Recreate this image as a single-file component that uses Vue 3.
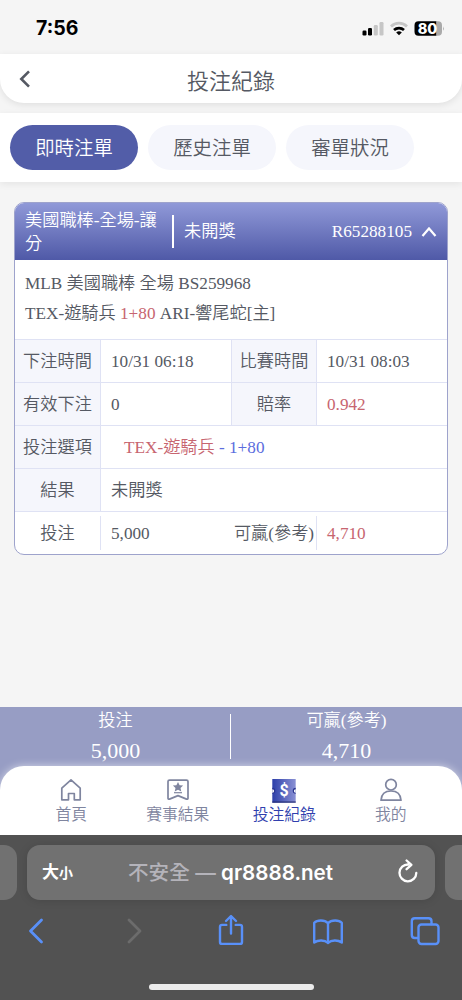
<script setup>
const tabs = ['即時注單', '歷史注單', '審單狀況']
const rows = [
  [
    { label: '下注時間', value: '10/31 06:18' },
    { label: '比賽時間', value: '10/31 08:03' },
  ],
  [
    { label: '有效下注', value: '0' },
    { label: '賠率', value: '0.942', red: true },
  ],
]
const totals = [
  { label: '投注', value: '5,000' },
  { label: '可贏(參考)', value: '4,710' },
]
</script>

<template>
  <div class="phone">
    <header class="status">
      <span class="clock">7:56</span>
      <svg class="signals" width="84" height="18" viewBox="0 0 84 18">
        <rect x="0.5" y="9.5" width="4" height="5" rx="1.2" fill="#000" />
        <rect x="6" y="7" width="4" height="7.5" rx="1.2" fill="#000" />
        <rect x="11.8" y="4" width="4" height="10.5" rx="1.2" fill="#c6c6c6" />
        <rect x="17.5" y="1" width="4" height="13.5" rx="1.2" fill="#c6c6c6" />
        <path d="M29 5.500a11.300 11.300 0 0 1 16 0" fill="none" stroke="#c6c6c6" stroke-width="2.7" />
        <path d="M32 9a7.4 7.4 0 0 1 10 0" fill="none" stroke="#000" stroke-width="2.7" />
        <path d="M34.2 11.5a4.2 4.2 0 0 1 5.6 0L37 14.3z" fill="#000" />
        <path d="M56.5.2h18v14.6h-18a4 4 0 0 1-4-4V4.2a4 4 0 0 1 4-4z" fill="#000" />
        <path d="M74.5.2h1.500a4 4 0 0 1 4 4v6.600a4 4 0 0 1-4 4h-1.500z" fill="#aaa" />
        <path d="M81 5.200q1.600 2.300 0 4.600z" fill="#aaa" />
        <text x="65.500" y="12.600" text-anchor="middle" class="battery">80</text>
      </svg>
    </header>

    <nav class="title-bar">
      <svg class="back" width="12" height="18" viewBox="0 0 12 18"><path d="M10 1.300 2.300 9l7.700 7.700" /></svg>
      <h1>投注紀錄</h1>
    </nav>

    <div class="tabs">
      <button v-for="(tab, i) in tabs" :key="tab" :class="{ active: i === 0 }">{{ tab }}</button>
    </div>

    <section class="card">
      <div class="card-head">
        <span class="game">美國職棒-全場-讓分</span>
        <i class="bar"></i>
        <span class="state">未開獎</span>
        <span class="serial">R65288105</span>
        <svg width="16" height="12" viewBox="0 0 16 12"><path d="M1.500 10 8 2.500l6.500 7.500" /></svg>
      </div>
      <div class="match">
        <p>MLB 美國職棒 全場 BS259968</p>
        <p>TEX-遊騎兵 <span class="red">1+80</span> ARI-響尾蛇[主]</p>
      </div>
      <div v-for="(row, i) in rows" :key="i" class="row">
        <template v-for="cell in row" :key="cell.label">
          <span class="label">{{ cell.label }}</span>
          <span class="value" :class="{ red: cell.red }">{{ cell.value }}</span>
        </template>
      </div>
      <div class="row wide">
        <span class="label">投注選項</span>
        <span class="value pick"><span class="red">TEX-遊騎兵</span> <span class="blue">- 1+80</span></span>
      </div>
      <div class="row wide">
        <span class="label">結果</span>
        <span class="value">未開獎</span>
      </div>
      <div class="row last">
        <span class="label">投注</span>
        <span class="value">5,000</span>
        <span class="label">可贏(參考)</span>
        <span class="value red">4,710</span>
      </div>
    </section>

    <footer class="bottom">
      <div class="totals">
        <div v-for="t in totals" :key="t.label" class="total">
          <span>{{ t.label }}</span>
          <b>{{ t.value }}</b>
        </div>
      </div>
      <nav class="menu">
        <a>
          <svg width="26" height="26" viewBox="0 0 26 26" class="line">
            <path d="M3.800 11.200 13 2.800l9.200 8.400v11.600h-5.900v-6.300h-5.800v6.300H3.800z" />
          </svg>
          <span>首頁</span>
        </a>
        <a>
          <svg width="26" height="26" viewBox="0 0 26 26" class="line">
            <path d="M4.500 3.100h17q1.500 0 1.500 1.500v16.700q0 1.200-1.500.8L13 18.600l-8.500 3.500q-1.500.4-1.500-.8V4.600q0-1.500 1.500-1.500z" />
            <path d="m13 5 1.600 3.200 3.500.4-2.600 2.400.8 3.500-3.300-1.800-3.300 1.800.8-3.500-2.600-2.400 3.500-.4z" fill="#7f859f" stroke="none" />
            <path d="M9 15.700h8" stroke-width="1.200" />
          </svg>
          <span>賽事結果</span>
        </a>
        <a class="current">
          <svg width="26" height="26" viewBox="0 0 26 26">
            <defs>
              <linearGradient id="ticket" x1="0" x2="1" y1="0" y2="0">
                <stop offset="0" stop-color="#2c3ea9" />
                <stop offset="1" stop-color="#8a91d4" />
              </linearGradient>
            </defs>
            <path d="M1.300 2h23.400v23.700H1.300z" fill="url(#ticket)" />
            <path d="M1.300 24.300h23.400v1.500H1.300z" fill="#252e72" opacity=".75" />
            <path d="M1.300 10.800a3 3 0 0 1 0 6zM24.700 10.800a3 3 0 0 0 0 6z" fill="#2a3590" />
            <path d="M1.300 12.300a1.800 1.800 0 0 1 0 3.600zM24.700 12.300a1.800 1.800 0 0 0 0 3.600z" fill="#fff" />
            <text x="13" y="19.300" text-anchor="middle" class="dollar">$</text>
          </svg>
          <span>投注紀錄</span>
        </a>
        <a>
          <svg width="26" height="26" viewBox="0 0 26 26" class="line">
            <circle cx="13" cy="7.700" r="5.300" />
            <path d="M3 23.200c.4-6 4.200-9.200 10-9.200s9.600 3.200 10 9.200z" />
          </svg>
          <span>我的</span>
        </a>
      </nav>
    </footer>

    <div class="browser">
      <div class="address-row">
        <i class="tab-edge left"></i>
        <div class="address">
          <span class="size">大<small>小</small></span>
          <span class="url"><em>不安全 —</em> qr8888.net</span>
          <svg width="22" height="26" viewBox="0 0 22 26">
            <path d="M11.300 5.500A8.400 8.400 0 1 0 19.300 14M9.600 1.500l4.800 4.300-4.800 4.400" />
          </svg>
        </div>
        <i class="tab-edge right"></i>
      </div>
      <div class="tools">
        <svg width="34" height="34" viewBox="-2 0 34 34"><path d="M20.500 6 9.500 17l11 11" stroke-width="2.800" /></svg>
        <svg width="34" height="34" viewBox="-2 0 34 34" class="off"><path d="m11 6 11 11-11 11" stroke-width="2.800" /></svg>
        <svg width="34" height="34" viewBox="-2 0 34 34">
          <path d="M10.300 10.900H6q-2 0-2 2v15q0 2 2 2h18q2 0 2-2v-15q0-2-2-2h-4.300M15 19.500V2.500M10 7l5-5 5 5" />
        </svg>
        <svg width="34" height="34" viewBox="0 0 34 34">
          <path d="M17 9.200C13.500 5.400 6 5.800 3.200 8.800V28.500c4-2.800 10.300-2.800 13.800.500 3.500-3.300 9.800-3.300 13.800-.500V8.800C28 5.800 20.500 5.400 17 9.200zV29" />
        </svg>
        <svg width="34" height="34" viewBox="0 0 34 34">
          <rect x="10.500" y="10.500" width="20" height="19.500" rx="3" />
          <path d="M10 24H6.800q-3 0-3-3V7.300q0-3 3-3H20.500q3 0 3 3v2.700" />
        </svg>
      </div>
      <i class="home-bar"></i>
    </div>
  </div>
</template>

<style>
body {
  background: #f5f5f5;
}
</style>

<style scoped>
* {
  box-sizing: border-box;
}
.phone {
  width: 462px;
  height: 1000px;
  overflow: hidden;
  display: flex;
  flex-direction: column;
  background: #f5f5f5;
  color: #555963;
  font: 350 17.200px/24px 'Liberation Serif', 'Noto Sans CJK TC', serif;
}
.status {
  height: 54px;
  flex: none;
  display: flex;
  justify-content: space-between;
  padding: 16px 16px 0 36px;
}
.clock {
  color: #000;
  font: 700 19.500px/24px Inter, sans-serif;
}
.signals {
  margin-top: 5px;
}
.battery {
  font: 800 14.500px Inter, sans-serif;
  fill: #fff;
}
.title-bar {
  height: 49px;
  flex: none;
  position: relative;
  display: flex;
  align-items: center;
  justify-content: center;
  background: #fff;
  border-radius: 0 0 24px 24px;
  box-shadow: 0 2px 7px rgba(0, 0, 0, 0.09);
}
.back {
  position: absolute;
  left: 19px;
  top: 16px;
  fill: none;
  stroke: #555963;
  stroke-width: 2.600;
}
h1 {
  margin: 0;
  font: 350 22px/30px 'Noto Sans CJK TC', sans-serif;
}
.tabs {
  height: 69px;
  flex: none;
  margin-top: 10px;
  padding: 12px 10px;
  display: flex;
  gap: 10px;
  background: #fff;
  box-shadow: 0 2px 7px rgba(0, 0, 0, 0.07);
}
.tabs button {
  width: 128px;
  height: 45px;
  border: 0;
  padding: 0 0 2px;
  border-radius: 23px;
  background: #f5f6fc;
  color: #555963;
  font: 350 19.400px/43px 'Noto Sans CJK TC', sans-serif;
}
.tabs .active {
  background: #525da8;
  color: #fff;
}
.card {
  width: 434px;
  height: 353px;
  flex: none;
  margin: 20px 0 0 14px;
  border: 1px solid #9ea3cc;
  border-radius: 10px;
  overflow: hidden;
  background: #fff;
}
.card-head {
  height: 57px;
  display: flex;
  align-items: center;
  padding: 0 10px;
  background: linear-gradient(#9099d8, #4f59a7);
  color: #fff;
}
.game {
  width: 147px;
  padding-right: 12px;
  line-height: 23px;
}
.bar {
  width: 2px;
  height: 33px;
  background: #fff;
}
.state {
  margin-left: 10px;
}
.serial {
  margin-left: auto;
  margin-right: 9px;
}
.card-head svg {
  fill: none;
  stroke: #fff;
  stroke-width: 2.200;
}
.match {
  height: 79px;
  padding: 9px 10px;
}
.match p {
  margin: 0;
  line-height: 30px;
}
.row {
  height: 43px;
  display: grid;
  grid-template-columns: 86px 131px 85px 1fr;
  grid-template-rows: 42px;
  border-top: 1px solid #dfe2f4;
  line-height: 43px;
}
.row.wide {
  grid-template-columns: 86px 1fr;
}
.label {
  text-align: center;
  background: #f5f6fc;
  border-right: 1px solid #dfe2f4;
  white-space: nowrap;
}
.value {
  padding-left: 10px;
}
.row:not(.wide) .value:nth-child(2) {
  border-right: 1px solid #dfe2f4;
}
.pick {
  padding-left: 23px;
}
.red {
  color: #c76570;
}
.blue {
  color: #5c6dde;
}
.row.last {
  grid-template-rows: 34px;
  padding: 4px 0;
  line-height: 36px;
}
.last .label {
  background: none;
}
.row.last .value:nth-child(2) {
  border: 0;
}
.bottom {
  height: 128px;
  flex: none;
  margin-top: 152px;
  background: #979dc4;
}
.totals {
  height: 59px;
  display: flex;
  color: #fff;
}
.total {
  width: 50%;
  display: flex;
  flex-direction: column;
  align-items: center;
  position: relative;
}
.total + .total::before {
  content: '';
  position: absolute;
  left: -1px;
  top: 7px;
  width: 1px;
  height: 45px;
  background: #fff;
}
.total span {
  line-height: 28px;
}
.total b {
  font-weight: 400;
  font-size: 22px;
  line-height: 32px;
}
.menu {
  height: 69px;
  display: flex;
  padding: 0 18px;
  background: #fff;
  border-radius: 24px 24px 0 0;
  box-shadow: 0 0 8px rgba(255, 255, 255, 0.6);
}
.menu a {
  flex: 1;
  display: flex;
  flex-direction: column;
  align-items: center;
  padding-top: 11px;
  color: #7f859f;
  font: 350 15.800px/22px 'Noto Sans CJK TC', sans-serif;
}
.menu .current {
  color: #303fae;
}
.line {
  fill: none;
  stroke: #7f859f;
  stroke-width: 1.700;
  stroke-linejoin: round;
}
.dollar {
  font: 700 16px Roboto, sans-serif;
  fill: #fff;
}
.browser {
  flex: 1;
  background: #525252;
}
.address-row {
  display: flex;
  justify-content: space-between;
  padding-top: 10px;
}
.tab-edge {
  width: 17px;
  height: 55px;
  background: #717171;
  border-radius: 0 13px 13px 0;
}
.tab-edge.right {
  border-radius: 13px 0 0 13px;
}
.address {
  width: 408px;
  height: 55px;
  display: flex;
  align-items: center;
  padding: 0 16px 0 15px;
  border-radius: 13px;
  background: #717171;
  box-shadow: 0 1px 10px rgba(0, 0, 0, 0.12);
  color: #fff;
  font: 600 20.600px/30px Inter, 'Noto Sans CJK TC', sans-serif;
}
.size {
  width: 86px;
  font-size: 17px;
  font-weight: 700;
}
.size small {
  font-size: 14px;
}
.url {
  white-space: nowrap;
}
.url em {
  font-style: normal;
  font-weight: 500;
  color: #b4b3ba;
}
.address svg {
  margin-left: auto;
  margin-top: -2px;
  fill: none;
  stroke: #fff;
  stroke-width: 2.300;
  stroke-linecap: round;
  stroke-linejoin: round;
}
.tools {
  display: flex;
  justify-content: space-between;
  padding: 14px 20px 0 19px;
}
.tools svg {
  fill: none;
  stroke: #5990f8;
  stroke-width: 2.400;
  stroke-linecap: round;
  stroke-linejoin: round;
}
.tools .off {
  stroke: #6c6c6c;
}
.home-bar {
  display: block;
  width: 165px;
  height: 6px;
  margin: 36px auto 0;
  border-radius: 3px;
  background: #ececec;
}
</style>
